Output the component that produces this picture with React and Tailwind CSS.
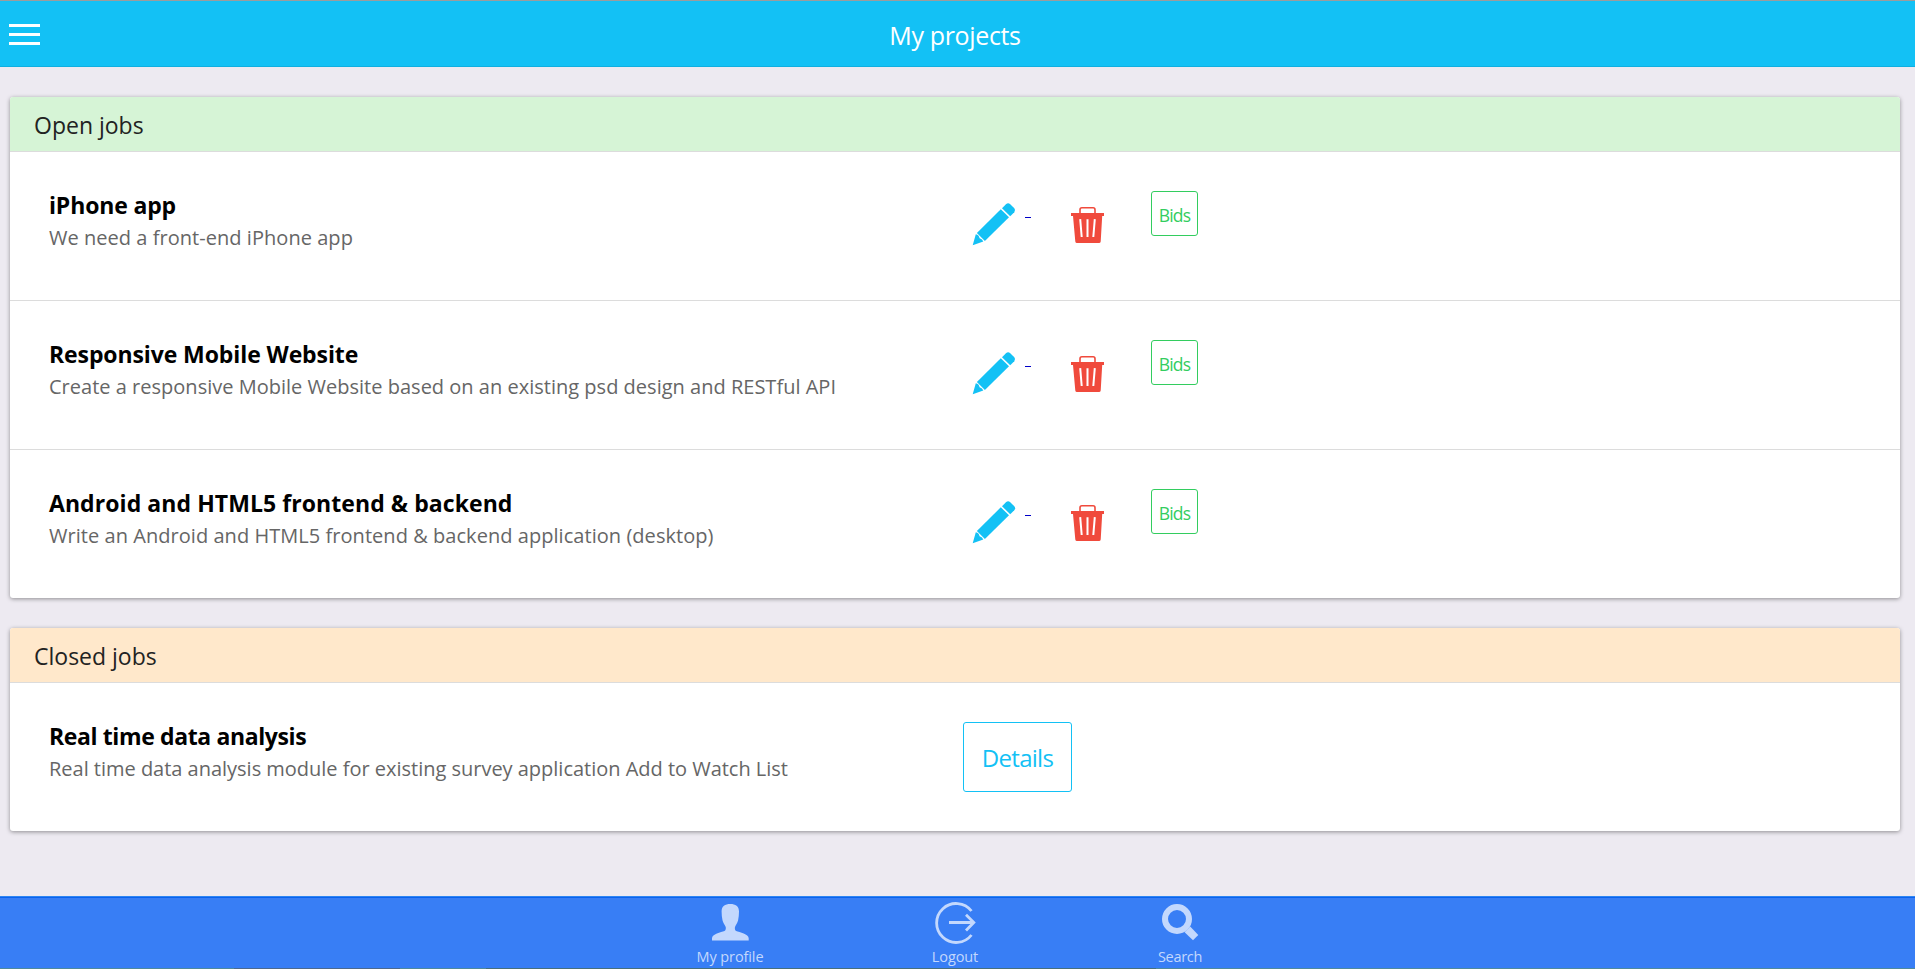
const openJobs = [
  { title: "iPhone app", titleTracking: "tracking-[-0.15px]", text: "We need a front-end iPhone app", textTracking: "tracking-[0.04px]" },
  { title: "Responsive Mobile Website", titleTracking: "tracking-[-0.1px]", text: "Create a responsive Mobile Website based on an existing psd design and RESTful API", textTracking: "tracking-[0.012px]" },
  { title: "Android and HTML5 frontend & backend", titleTracking: "tracking-[0.07px]", text: "Write an Android and HTML5 frontend & backend application (desktop)", textTracking: "tracking-[0.046px]" },
];

const closedJob = {
  title: "Real time data analysis",
  titleTracking: "tracking-[-0.38px]",
  text: "Real time data analysis module for existing survey application Add to Watch List",
  textTracking: "tracking-[-0.015px]",
};

function Pencil() {
  return (
    <svg viewBox="0 0 44 44" className="h-11 w-11" fill="#13c1f5">
      <path d="M.7 43.300 3.800 32.300Q7 33 7.600 36.300 10.500 37 11.300 39.600Z" />
      <path d="M4.900 30.900 28.800 7.300 37 15.300 12.900 39Z" />
      <path d="M30 6.200 34.200 2q1.900-1.600 3.800 0l4.300 4.200q1.700 2 0 4L38.200 14.300Z" />
    </svg>
  );
}

function Trash() {
  return (
    <svg viewBox="0 0 33 36" className="h-9 w-[33px]">
      <path d="M9 7V2.700q0-1.900 1.900-1.900h11.200q1.900 0 1.900 1.900V7" fill="none" stroke="#f04a3c" strokeWidth="1.600" />
      <path d="M0 6h33v3h-1.800L29.700 34.500q-.2 1.500-1.700 1.500h-22q-1.500 0-1.700-1.500L2 9H0Z" fill="#f04a3c" />
      <path d="M9.200 12.200 10.700 30M16.500 12.200V30M23.800 12.200 22.300 30" stroke="white" strokeWidth="2" />
    </svg>
  );
}

function Person() {
  return (
    <svg viewBox="0 0 37 37" className="h-[37px] w-[37px]" fill="#c3d8fd">
      <path d="M18.300 0C23.500 0 27 2.200 27 7.500c0 2.800-.3 6-.9 8.800-.5 2.500-2.200 4.600-3 6.500-.5 1.300-.3 3.600 1 4.100 3.500 1.200 12.600 3 12.600 7.300V36.500H0v-2.300c0-4.300 9-6.100 12.500-7.300 1.400-.5 1.600-2.800 1.100-4.100-.8-1.900-2.600-4-3.100-6.500C9.900 13.500 9.600 10.300 9.600 7.500 9.600 2.200 13 0 18.300 0Z" />
    </svg>
  );
}

function LogoutIcon() {
  return (
    <svg viewBox="0 0 42 42" className="h-[42px] w-[42px]" fill="none" stroke="#c3d8fd" strokeWidth="2.800">
      <path d="M37.500 9A19.500 19.500 0 1 0 37.500 33" />
      <path d="M15 20.500H40M32 12.800 39.800 20.500 32 28.500" />
    </svg>
  );
}

function SearchIcon() {
  return (
    <svg viewBox="0 0 37 37" className="h-[37px] w-[37px]">
      <circle cx="15" cy="15" r="12" fill="none" stroke="#c3d8fd" strokeWidth="6" />
      <path d="M28.200 22.600 36.300 31 31 36.300 22.600 28.200Z" fill="#c3d8fd" />
    </svg>
  );
}

function Row({ job, children }) {
  return (
    <div className="flex h-[149px] border-t border-[#dcdcdc] pt-[39px] pl-[39px]">
      <div className="-mt-[2px] w-[914px] shrink-0">
        <h2 className={"whitespace-nowrap text-[23px] leading-[33px] font-bold text-black " + job.titleTracking}>{job.title}</h2>
        <p className={"whitespace-nowrap text-[20px] leading-[32px] text-[#666] " + job.textTracking}>{job.text}</p>
      </div>
      {children}
    </div>
  );
}

function Tab({ label, tracking, children }) {
  return (
    <a className="flex w-[225px] flex-col items-center">
      <span className="flex h-[50px] items-center">{children}</span>
      <span className={"text-[14.500px] leading-[22px] text-[#c3d8fd] " + tracking}>{label}</span>
    </a>
  );
}

export default function App() {
  return (
    <div className="flex h-[969px] flex-col overflow-hidden bg-[#edeaf1] font-['Open_Sans',sans-serif]">
      <header className="grid h-[67px] grid-cols-[1fr_auto_1fr] items-center border-t border-b border-t-[#9c9c9c] border-b-[#0fafe0] bg-[#13c1f5] pr-[5px]">
        <button className="mt-[2px] ml-[9px] flex w-[31px] flex-col gap-[6px]">
          <span className="h-[3px] w-full bg-white" />
          <span className="h-[3px] w-full bg-white" />
          <span className="h-[3px] w-full bg-white" />
        </button>
        <h1 className="pt-[3px] text-[25px] leading-[32px] tracking-[-0.35px] text-white">My projects</h1>
      </header>
      <main className="flex flex-1 flex-col gap-[30px] pt-[30px] pr-[15px] pl-[10px]">
        <section className="overflow-hidden rounded-[3px] bg-white shadow-[0_1px_4px_rgba(0,0,0,0.4)]">
          <div className="h-[54px] bg-[#d6f4d6] pl-6 text-[23px] leading-[57px] text-[#222]">Open jobs</div>
          {openJobs.map((job) => (
            <Row key={job.title} job={job}>
              <a className="flex w-[108px] pl-[9px]">
                <span className="mt-[11px] h-11"><Pencil /></span>
                <span className="mt-[26px] ml-[9px] h-px w-[6px] bg-[#0000c8]" />
              </a>
              <span className="mt-[16px] w-[80px]"><Trash /></span>
              <button className="h-[45px] w-[47px] rounded-[3px] border border-[#33cd5f] text-[17.5px] leading-[46px] tracking-[-0.8px] text-[#33cd5f]">Bids</button>
            </Row>
          ))}
        </section>
        <section className="overflow-hidden rounded-[3px] bg-white shadow-[0_1px_4px_rgba(0,0,0,0.4)]">
          <div className="h-[54px] bg-[#ffe8cb] pl-6 text-[23px] leading-[57px] text-[#222]">Closed jobs</div>
          <Row job={closedJob}>
            <button className="h-[70px] w-[109px] rounded-[3px] border border-[#13c1f5] text-[24px] leading-[67px] tracking-[-0.7px] text-[#13c1f5]">Details</button>
          </Row>
        </section>
      </main>
      <footer className="flex h-[73px] flex-col border-t border-[#2f86f2] bg-[#387ef5]">
        <div className="flex h-[71px] justify-center border-t border-[#0c63ee] pt-px pr-[5px]">
          <Tab label="My profile" tracking="tracking-[-0.1px]"><Person /></Tab>
          <Tab label="Logout" tracking="tracking-[-0.1px]"><LogoutIcon /></Tab>
          <Tab label="Search" tracking="tracking-[-0.3px]"><SearchIcon /></Tab>
        </div>
        <div className="flex h-px">
          <span className="w-[234px] bg-[#4f8a9c]" />
          <span className="w-[166px] bg-[#4c6a8e]" />
          <span className="w-[86px] bg-[#4f8a9c]" />
          <span className="w-[670px] bg-[#47707c]" />
          <span className="flex-1 bg-[#4f8a9c]" />
        </div>
      </footer>
    </div>
  );
}
